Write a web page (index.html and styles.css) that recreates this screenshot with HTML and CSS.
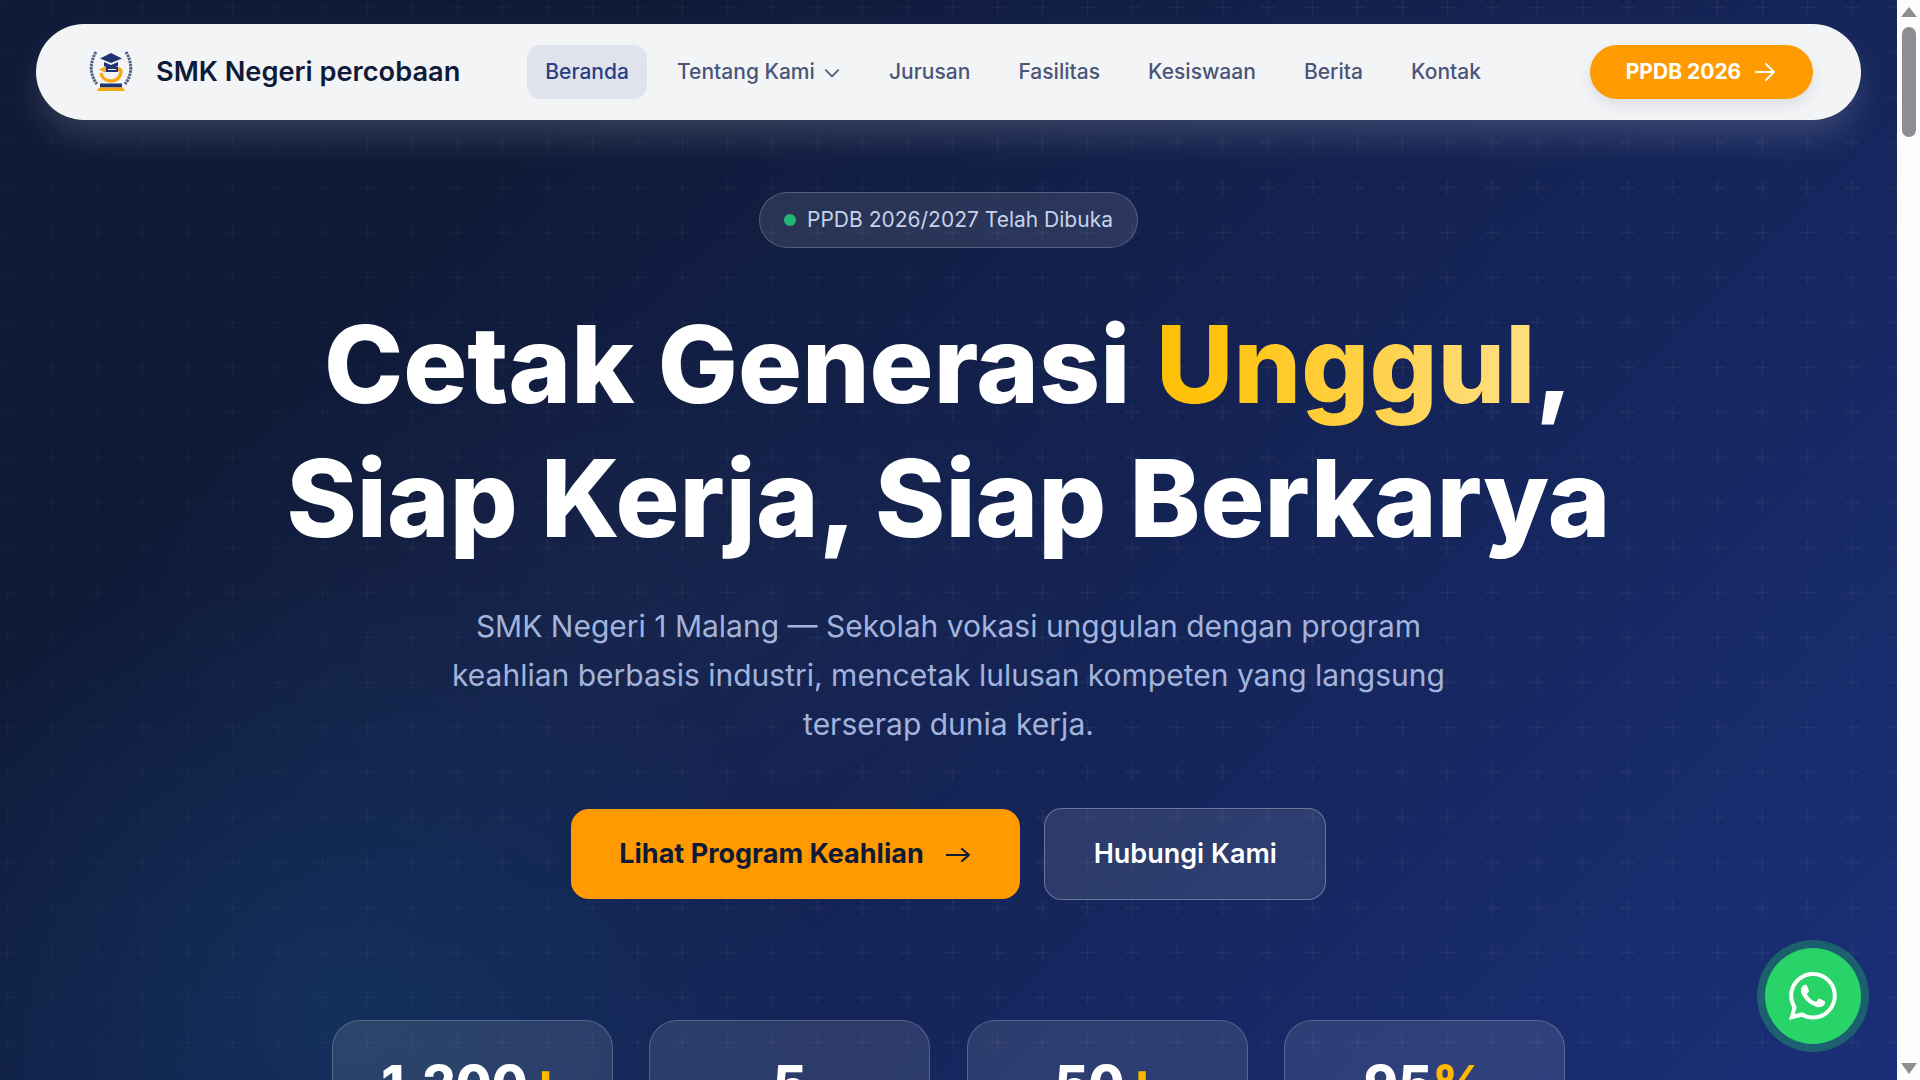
FILE: index.html
```html
<!DOCTYPE html>
<html lang="en">
<head>
    <meta charset="UTF-8">
    <meta name="viewport" content="width=device-width, initial-scale=1.0">
    <title>SMK Negeri percobaan</title>
    <link rel="stylesheet" href="styles.css">
</head>
<body>

    <div class="page">
        <main class="hero">
            <nav class="navbar">
                <a class="brand" href="#">
                    <svg class="brand-logo" viewBox="0 0 44 44">
                        <g fill="none" stroke="#515f86" stroke-width="3" stroke-dasharray="2.4 .8">
                            <path d="M7 2C1 12 0 24 8 34"/>
                            <path d="M37 2c6 10 7 22-1 32"/>
                        </g>
                        <path d="M22 3 33 8.5 22 13 11 8.5z" fill="#1f3470"/>
                        <path d="M15 12v4c4 2 10 2 14 0v-4l-7 3z" fill="#1f3470"/>
                        <path d="M10 19.5 15 17h2v5h-2z" fill="#f9a813"/>
                        <path d="M17 17h12v5H17z" fill="#1f3470"/>
                        <path d="M19 19.5h8" stroke="#ffffff" stroke-width="1"/>
                        <path d="M12 23c1 5 5 8 10 8s9-3 10-9c0-2-1-3-3-3" fill="none" stroke="#f9a813" stroke-width="3.4"/>
                        <path d="M11 33.5h22v4H11z" fill="#1f3470"/>
                        <path d="M8 41l2-3.5h24l2 3.5z" fill="#f9a813"/>
                    </svg>
                    <span>SMK Negeri percobaan</span>
                </a>
                <div class="nav-links">
                    <a class="nav-link active" href="#">Beranda</a>
                    <a class="nav-link" href="#">Tentang Kami
                        <svg class="chevron" viewBox="6 8 12 8"><path d="m6.5 9 5.5 5.5L17.5 9"/></svg>
                    </a>
                    <a class="nav-link" href="#">Jurusan</a>
                    <a class="nav-link" href="#">Fasilitas</a>
                    <a class="nav-link" href="#">Kesiswaan</a>
                    <a class="nav-link" href="#">Berita</a>
                    <a class="nav-link" href="#">Kontak</a>
                </div>
                <a class="nav-cta" href="#">PPDB 2026
                    <svg class="arrow" viewBox="0 0 24 24"><path d="M3 12h18M13 4l8 8-8 8"/></svg>
                </a>
            </nav>

            <section class="hero-content">
                <div class="badge"><span class="badge-dot"></span>PPDB 2026/2027 Telah Dibuka</div>
                <h1>Cetak Generasi <span class="accent">Unggul</span>,<br>Siap Kerja, Siap Berkarya</h1>
                <p class="lead">SMK Negeri 1 Malang — Sekolah vokasi unggulan dengan program keahlian berbasis industri, mencetak lulusan kompeten yang langsung terserap dunia kerja.</p>
                <div class="hero-actions">
                    <a class="btn btn-primary" href="#">Lihat Program Keahlian
                        <svg class="arrow" viewBox="0 0 24 24"><path d="M0 12h23M16 6l7 6-7 6"/></svg>
                    </a>
                    <a class="btn btn-ghost" href="#">Hubungi Kami</a>
                </div>
                <div class="stats">
                    <div class="stat-card"><div class="stat-num">1.200<span>+</span></div></div>
                    <div class="stat-card"><div class="stat-num">5</div></div>
                    <div class="stat-card"><div class="stat-num">50<span>+</span></div></div>
                    <div class="stat-card"><div class="stat-num">95<span>%</span></div></div>
                </div>
            </section>

            <a class="wa-float" href="#">
                <svg viewBox="0 0 16 16"><path d="M13.601 2.326A7.854 7.854 0 0 0 7.994 0C3.627 0 .068 3.558.064 7.926c0 1.399.366 2.76 1.057 3.965L0 16l4.204-1.102a7.933 7.933 0 0 0 3.79.965h.004c4.368 0 7.926-3.558 7.93-7.93A7.898 7.898 0 0 0 13.6 2.326zM7.994 14.521a6.573 6.573 0 0 1-3.356-.92l-.24-.144-2.494.654.666-2.433-.156-.251a6.56 6.56 0 0 1-1.007-3.505c0-3.626 2.957-6.584 6.591-6.584a6.56 6.56 0 0 1 4.66 1.931 6.557 6.557 0 0 1 1.928 4.66c-.004 3.639-2.961 6.592-6.592 6.592zm3.615-4.934c-.197-.099-1.17-.578-1.353-.646-.182-.065-.315-.099-.445.099-.133.197-.513.646-.627.775-.114.133-.232.148-.43.05-.197-.1-.836-.308-1.592-.985-.59-.525-.985-1.175-1.103-1.372-.114-.198-.011-.304.088-.403.087-.088.197-.232.296-.346.1-.114.133-.198.198-.33.065-.134.034-.248-.015-.347-.05-.099-.445-1.076-.612-1.47-.16-.389-.323-.335-.445-.34-.114-.007-.247-.007-.38-.007a.729.729 0 0 0-.529.247c-.182.198-.691.677-.691 1.654 0 .977.71 1.916.81 2.049.098.133 1.394 2.132 3.383 2.992.47.205.84.326 1.129.418.475.152.904.129 1.246.08.38-.058 1.171-.48 1.338-.943.164-.464.164-.86.114-.943-.049-.084-.182-.133-.38-.232z"/></svg>
            </a>
        </main>

        <aside class="scrollbar">
            <span class="scroll-up"></span>
            <span class="scroll-thumb"></span>
            <span class="scroll-down"></span>
        </aside>
    </div>

</body>
</html>
```

FILE: styles.css
```css
* {
    box-sizing: border-box;
}
body {
    margin: 0;
    font-family: Inter, "Noto Sans", sans-serif;
    background: #ffffff;
}
a {
    text-decoration: none;
}
.page {
    display: flex;
    height: 100vh;
    overflow: hidden;
}

/* hero background */
.hero {
    flex: 1;
    position: relative;
    isolation: isolate;
    overflow: hidden;
    padding-top: 24px;
    background-color: #152558;
    background-image:
        radial-gradient(ellipse 500px 300px at 620px 600px, rgba(255, 255, 255, 0.025), rgba(255, 255, 255, 0) 100%),
        radial-gradient(ellipse 480px 440px at 340px 1000px, rgba(20, 85, 130, 0.3), rgba(20, 85, 130, 0) 100%),
        linear-gradient(135deg, #0f1a38 0%, #0f1a38 22%, #1a2f78 100%);
}
/* plus pattern, fainter towards the left */
.hero::before {
    content: "";
    position: absolute;
    inset: 0;
    z-index: -1;
    background-image: url("data:image/svg+xml,%3Csvg xmlns='http://www.w3.org/2000/svg' width='45' height='45'%3E%3Cpath d='M21.75 15h1.5v6.75H30v1.5h-6.75V30h-1.5v-6.75H15v-1.5h6.75z' fill='%23ffffff' fill-opacity='.05'/%3E%3C/svg%3E");
    background-position: -15px -15px;
    -webkit-mask-image: linear-gradient(100deg, rgba(0, 0, 0, 0.45), #000 60%);
    mask-image: linear-gradient(100deg, rgba(0, 0, 0, 0.45), #000 60%);
}

/* navbar */
.navbar {
    display: flex;
    align-items: center;
    justify-content: space-between;
    height: 96px;
    margin: 0 36px;
    padding: 0 48px 0 53px;
    background: #f3f4f6;
    border-radius: 48px;
    box-shadow: 0 18px 40px -8px rgba(255, 255, 255, 0.2);
}
.brand {
    display: flex;
    align-items: center;
    gap: 23px;
    color: #0f1a38;
    font-size: 27.2px;
    font-weight: 600;
}
.brand span {
    padding-bottom: 2px;
}
.brand-logo {
    width: 44px;
    height: 44px;
}
.nav-links {
    display: flex;
    align-items: center;
    gap: 12.15px;
    margin-left: 67px;
    margin-right: auto;
}
.nav-link {
    display: flex;
    align-items: center;
    gap: 10px;
    height: 54px;
    padding: 0 18px 2px;
    border-radius: 14px;
    color: #4a5578;
    font-size: 21px;
    font-weight: 500;
}
.nav-link.active {
    background: #e0e2ed;
    color: #2a3f80;
}
.chevron {
    width: 14px;
    height: 9px;
    margin: 4px 2px 0 0;
    fill: none;
    stroke: currentColor;
    stroke-width: 1.6;
    stroke-linecap: round;
    stroke-linejoin: round;
}
.arrow {
    fill: none;
    stroke: currentColor;
    stroke-width: 2;
    stroke-linecap: round;
    stroke-linejoin: round;
}
.nav-cta {
    display: flex;
    align-items: center;
    justify-content: center;
    gap: 12px;
    width: 223px;
    height: 54px;
    padding-bottom: 2px;
    border-radius: 27px;
    background: #ff9b00;
    color: #ffffff;
    font-size: 21px;
    font-weight: 700;
    box-shadow: 0 6px 14px rgba(15, 26, 56, 0.1);
}
.nav-cta .arrow {
    width: 24px;
    height: 24px;
    margin-top: 2px;
}

/* hero text */
.hero-content {
    display: flex;
    flex-direction: column;
    align-items: center;
    padding-top: 72px;
    text-align: center;
}
.badge {
    display: flex;
    align-items: center;
    gap: 11px;
    height: 56px;
    padding: 0 24px 1px;
    border: 1px solid rgba(255, 255, 255, 0.2);
    border-radius: 28px;
    background: rgba(255, 255, 255, 0.1);
    color: #c5d3ea;
    font-size: 21px;
    font-weight: 400;
}
.badge-dot {
    width: 12px;
    height: 12px;
    border-radius: 50%;
    background: #22b573;
}
h1 {
    margin: 50px 0 0;
    color: #ffffff;
    font-size: 106.6px;
    font-weight: 800;
    line-height: 134px;
}
.accent {
    margin-left: 2.4px;
    background: linear-gradient(90deg, #ffc107 10%, #ffdd78 90%);
    -webkit-background-clip: text;
    background-clip: text;
    color: transparent;
}
.lead {
    width: 1020px;
    margin: 36px 0 0;
    color: #a3b4dc;
    font-size: 30px;
    line-height: 49px;
}
.hero-actions {
    display: flex;
    align-items: center;
    gap: 24px;
    margin-top: 59px;
}
.btn {
    display: flex;
    align-items: center;
    justify-content: center;
    padding-bottom: 2px;
    border-radius: 18px;
    font-size: 27px;
    font-weight: 700;
}
.btn-primary {
    gap: 22px;
    width: 449.5px;
    height: 90px;
    padding-right: 2px;
    background: #ff9b00;
    color: #0f1a38;
}
.btn-primary .arrow {
    width: 24px;
    height: 24px;
    margin-top: 4px;
}
.btn-ghost {
    width: 282px;
    height: 92px;
    border: 1px solid rgba(255, 255, 255, 0.3);
    background: rgba(255, 255, 255, 0.1);
    color: #ffffff;
    font-weight: 600;
}

/* stats row, cut by the fold */
.stats {
    display: flex;
    gap: 36.5px;
    margin-top: 120px;
}
.stat-card {
    width: 281px;
    height: 200px;
    padding-top: 33px;
    border: 1px solid rgba(255, 255, 255, 0.2);
    border-radius: 28px;
    background: rgba(255, 255, 255, 0.1);
}
.stat-num {
    color: #ffffff;
    font-size: 52px;
    font-weight: 800;
    line-height: 1.2;
}
.stat-num span {
    color: #ffb800;
}

/* whatsapp button */
.wa-float {
    position: absolute;
    left: 1765px;
    top: 948px;
    display: flex;
    align-items: center;
    justify-content: center;
    width: 96px;
    height: 96px;
    border-radius: 50%;
    background: #28d367;
    box-shadow: 0 0 0 8px rgba(37, 211, 102, 0.3);
}
.wa-float svg {
    width: 48px;
    height: 48px;
    fill: #ffffff;
}

/* browser scrollbar */
.scrollbar {
    position: relative;
    flex: 0 0 23px;
    background: #fdfdfd;
}
.scroll-up,
.scroll-down {
    position: absolute;
    left: 4px;
    width: 0;
    height: 0;
    border-left: 8px solid transparent;
    border-right: 8px solid transparent;
}
.scroll-up {
    top: 7px;
    border-bottom: 10px solid #8e8e92;
}
.scroll-down {
    bottom: 6px;
    border-top: 11px solid #8e8e92;
}
.scroll-thumb {
    position: absolute;
    left: 5px;
    top: 27px;
    width: 14px;
    height: 110px;
    border-radius: 7px;
    background: #8e8e92;
}
```
